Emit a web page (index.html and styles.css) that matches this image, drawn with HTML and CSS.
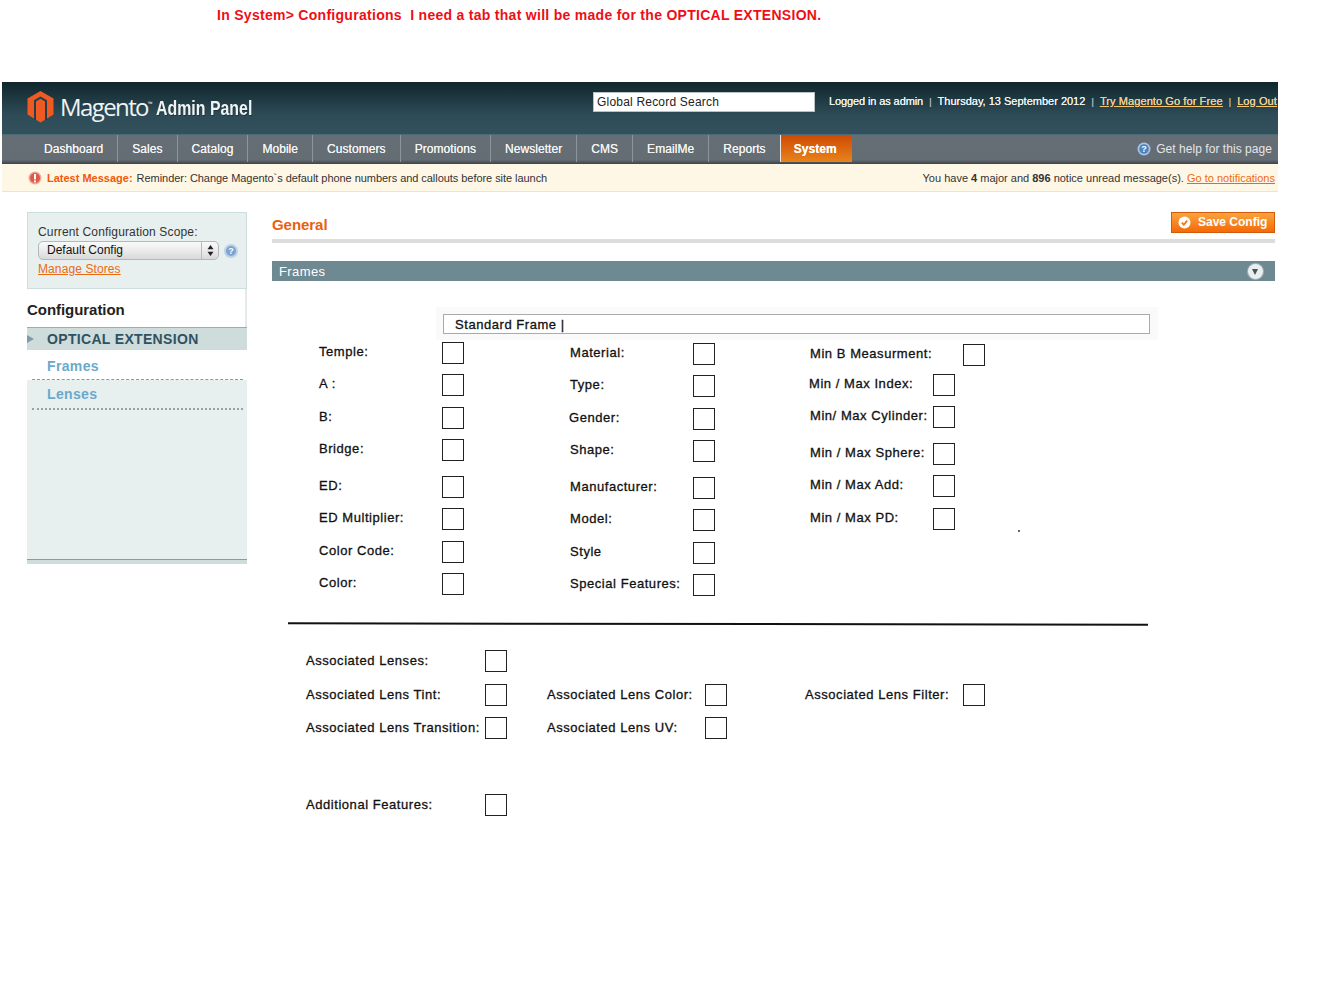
FILE: index.html
```html
<!DOCTYPE html>
<html lang="en">
<head>
<meta charset="utf-8">
<title>Magento Admin Panel</title>
<link rel="stylesheet" href="styles.css">
</head>
<body>
<p class="request">In System&gt; Configurations&nbsp; I need a tab that will be made for the OPTICAL EXTENSION.</p>
<div class="shell">
  <header class="topbar">
    <div class="brand">
      <svg class="logo" width="27" height="32" viewBox="0 0 27 32"><path fill="#ef5a22" d="M13.500 0 26.500 7.500V23.500L13.500 31.500 .5 23.500V7.500Z"/><path fill="none" stroke="#23404b" stroke-width="2" d="M8 29V9.800L13.500 6.600 19 9.800V29"/></svg>
      <span class="wordmark">Magento<sup class="tm">™</sup></span>
      <span class="panel-name">Admin Panel</span>
    </div>
    <div class="search">Global Record Search</div>
    <div class="session">
      <span class="who">Logged in as admin</span><i>|</i><span>Thursday, 13 September 2012</span><i>|</i><a href="#">Try Magento Go for Free</a><i>|</i><a href="#">Log Out</a>
    </div>
  </header>
  <nav class="nav">
    <ul class="nav-list">
      <li>Dashboard</li><li>Sales</li><li>Catalog</li><li>Mobile</li><li>Customers</li><li>Promotions</li><li>Newsletter</li><li>CMS</li><li>EmailMe</li><li>Reports</li><li class="active">System</li>
    </ul>
    <div class="help">
      <svg width="14" height="14" viewBox="0 0 14 14"><circle cx="7" cy="7" r="6.500" fill="#a9c6e8"/><circle cx="7" cy="7" r="4.800" fill="#4f83bd"/><text x="7" y="10" class="glyph">?</text></svg>
      <span>Get help for this page</span>
    </div>
  </nav>
  <div class="notice">
    <div class="notice-left">
      <svg width="14" height="14" viewBox="0 0 14 14"><circle cx="7" cy="7" r="6.500" fill="#f0a79a"/><circle cx="7" cy="7" r="5" fill="#dd5a48"/><rect x="6" y="3" width="2" height="5.500" fill="#fff"/><rect x="6" y="9.500" width="2" height="1.800" fill="#fff"/></svg>
      <b class="latest">Latest Message:</b>
      <span class="reminder">Reminder: Change Magento`s default phone numbers and callouts before site launch</span>
    </div>
    <div class="notice-right">You have <b>4</b> major and <b>896</b> notice unread message(s). <a href="#">Go to notifications</a></div>
  </div>
  <div class="content">
    <aside class="sidebar">
      <div class="scope">
        <div class="scope-label">Current Configuration Scope:</div>
        <div class="scope-row">
          <div class="select"><span>Default Config</span><span class="select-arrows"><svg width="7" height="11" viewBox="0 0 7 11"><path fill="#222" d="M3.500 0 6.500 4.300H.5ZM3.500 11 .5 6.700H6.500Z"/></svg></span></div>
          <svg class="scope-help" width="14" height="14" viewBox="0 0 14 14"><circle cx="7" cy="7" r="7" fill="#bcd2e8"/><circle cx="7" cy="7" r="5" fill="#7ea3cf"/><text x="7" y="10" class="glyph">?</text></svg>
        </div>
        <a class="manage" href="#">Manage Stores</a>
      </div>
      <h3 class="side-title">Configuration</h3>
      <div class="side-section"><span class="side-arrow"></span>OPTICAL EXTENSION</div>
      <a class="side-link side-link-on" href="#">Frames</a>
      <div class="side-rest">
        <a class="side-link" href="#">Lenses</a>
      </div>
    </aside>
    <main class="main">
      <div class="main-head">
        <h2 class="main-title">General</h2>
        <button class="save" type="button"><svg width="13" height="13" viewBox="0 0 13 13"><circle cx="6.500" cy="6.500" r="6" fill="#fff"/><path d="M3.800 6.700 5.800 8.700 9.200 4.600" fill="none" stroke="#f07a10" stroke-width="1.800"/></svg><span class="save-text">Save Config</span></button>
      </div>
      <div class="rule"></div>
      <div class="bar"><span>Frames</span><span class="toggle"></span></div>
      <section class="sheet">
        <div class="frame-panel"><div class="frame-input">Standard Frame |</div></div>
        <div class="fields">
          <div class="col">
            <div class="field"><label>Temple:</label><span class="box"></span></div>
            <div class="field gap-11"><label>A :</label><span class="box"></span></div>
            <div class="field"><label>B:</label><span class="box"></span></div>
            <div class="field gap-15"><label>Bridge:</label><span class="box"></span></div>
            <div class="field"><label>ED:</label><span class="box"></span></div>
            <div class="field gap-11"><label>ED Multiplier:</label><span class="box"></span></div>
            <div class="field"><label>Color Code:</label><span class="box"></span></div>
            <div class="field"><label>Color:</label><span class="box"></span></div>
          </div>
          <div class="col col-2">
            <div class="field"><label>Material:</label><span class="box"></span></div>
            <div class="field gap-11"><label>Type:</label><span class="box"></span></div>
            <div class="field"><label class="pull">Gender:</label><span class="box"></span></div>
            <div class="field gap-15"><label>Shape:</label><span class="box"></span></div>
            <div class="field"><label>Manufacturer:</label><span class="box"></span></div>
            <div class="field gap-11"><label>Model:</label><span class="box"></span></div>
            <div class="field"><label>Style</label><span class="box"></span></div>
            <div class="field"><label>Special Features:</label><span class="box"></span></div>
          </div>
          <div class="col col-3">
            <div class="field gap-8 wide"><label>Min B Measurment:</label><span class="box"></span></div>
            <div class="field"><label class="pull">Min / Max Index:</label><span class="box"></span></div>
            <div class="field gap-15"><label>Min/ Max Cylinder:</label><span class="box"></span></div>
            <div class="field"><label>Min / Max Sphere:</label><span class="box"></span></div>
            <div class="field gap-11"><label>Min / Max Add:</label><span class="box"></span></div>
            <div class="field"><label>Min / Max PD:</label><span class="box"></span></div>
          </div>
          <span class="speck"></span>
        </div>
        <hr class="divider">
        <div class="assoc">
          <div class="assoc-row assoc-first">
            <div class="field assoc-a"><label>Associated Lenses:</label><span class="box"></span></div>
          </div>
          <div class="assoc-row">
            <div class="field assoc-a"><label>Associated Lens Tint:</label><span class="box"></span></div>
            <div class="field assoc-b"><label>Associated Lens Color:</label><span class="box"></span></div>
            <div class="field assoc-c"><label>Associated Lens Filter:</label><span class="box"></span></div>
          </div>
          <div class="assoc-row">
            <div class="field assoc-a"><label>Associated Lens Transition:</label><span class="box"></span></div>
            <div class="field assoc-b"><label>Associated Lens UV:</label><span class="box"></span></div>
          </div>
          <div class="assoc-row assoc-last">
            <div class="field assoc-a"><label>Additional Features:</label><span class="box"></span></div>
          </div>
        </div>
      </section>
    </main>
  </div>
</div>
</body>
</html>
```
FILE: styles.css
```css
* { box-sizing: border-box; }
html, body { margin: 0; padding: 0; background: #fff; }
body { font-family: "Liberation Sans", Arial, sans-serif; color: #2f2f2f; height: 1000px; overflow: hidden; }
a { color: inherit; }
.request { margin: 0; height: 82px; padding: 7px 0 0 217px; color: #ee0f16; font-size: 14px; line-height: 16px; font-weight: 700; letter-spacing: .285px; }
.shell { margin-left: 2px; width: 1276px; overflow: hidden; }

.topbar { height: 53px; display: flex; background: linear-gradient(#10262c, #2e4c58 65%, #33515c); border-bottom: 1px solid #4c6a76; white-space: nowrap; overflow: hidden; }
.brand { width: 591px; flex: none; display: flex; align-items: flex-start; color: #fff; padding: 9px 0 0 25px; }
.logo { display: block; flex: none; }
.wordmark { margin-left: 6px; font-family: "Open Sans", sans-serif; font-size: 24px; line-height: 32px; letter-spacing: -1.600px; color: #eef3f4; }
.tm { font-size: 6px; line-height: 0; vertical-align: 10px; letter-spacing: 0; }
.panel-name { display: inline-block; margin: 5px 0 0 3px; font-weight: 700; font-size: 20px; line-height: 24px; color: #eef3f4; text-shadow: 1px 1px 0 #1d323a; transform: scaleX(.795); transform-origin: left center; }
.search { flex: none; width: 222px; height: 20px; margin-top: 10px; padding-left: 3px; background: #fff; border: 1px solid #b9c1c4; color: #222; font-size: 12px; line-height: 18px; letter-spacing: .2px; }
.session { flex: none; margin: 12px 0 0 14px; color: #eef2f3; font-size: 11px; line-height: 14px; text-shadow: 0 0 .5px #fff; }
.who { letter-spacing: -.11px; }
.session i { font-style: normal; color: #8ea3ab; margin: 0 6.100px; font-size: 9px; }
.session a { color: #f7c56e; letter-spacing: .09px; }

.nav { height: 29px; display: flex; justify-content: space-between; background: linear-gradient(#666e75 0, #656d74 85%, #3d4348 100%); color: #f1f3f4; font-size: 12px; line-height: 28px; }
.nav-list { display: flex; margin: 0; padding: 0 0 0 28px; list-style: none; letter-spacing: .06px; }
.nav-list li { height: 27px; padding: 0 14px; border-right: 1px solid #8d959b; text-shadow: 0 0 .5px #fff; }
.nav-list .active { margin-left: -1px; padding: 0 14px 0 13px; border-left: 1px solid #e9e9e9; border-right: 0; font-weight: 700; color: #fff; background: linear-gradient(#cf4a04, #e8831b); width: 72px; }
.help { display: flex; align-items: center; gap: 5px; height: 27px; padding-right: 6px; color: #e2e6ea; letter-spacing: .05px; }
.help svg, .notice svg { display: block; flex: none; }
.glyph { fill: #fff; font: 700 9px "Liberation Sans", sans-serif; text-anchor: middle; }

.notice { height: 28px; display: flex; justify-content: space-between; align-items: center; background: #fff7e6; border-bottom: 1px solid #f5e3bd; color: #333; font-size: 11px; padding: 1px 3px 0 26px; }
.notice-left { display: flex; align-items: center; gap: 5px; }
.latest { color: #f0590b; }
.notice-left .latest { margin-right: -1px; }
.reminder { letter-spacing: -.05px; }
.notice-right a { color: #ee6a12; }

.content { display: flex; align-items: flex-start; padding: 20px 1px 0 25px; }
.sidebar { width: 220px; flex: none; height: 348px; display: flex; flex-direction: column; }
.scope { height: 77px; padding: 12px 10px 0 10px; background: #e7efef; border: 1px solid #cddddd; font-size: 12px; }
.scope-label { line-height: 14px; color: #333; letter-spacing: .15px; }
.scope-row { display: flex; align-items: center; gap: 5px; margin-top: 2px; }
.select { width: 181px; height: 19px; flex: none; display: flex; justify-content: space-between; border: 1px solid #b3b8b8; border-radius: 5px; background: linear-gradient(#fafafa, #e8e8e8 60%, #d8d8d8); color: #111; line-height: 17px; padding-left: 8px; }
.select-arrows { width: 17px; border-left: 1px solid #bbb; display: flex; align-items: center; justify-content: center; }
.scope-help { flex: none; display: block; }
.manage { display: block; color: #ee6a12; line-height: 14px; margin-top: 2px; letter-spacing: .1px; }
.side-title { height: 38px; margin: 0; background: #fff; border-right: 2px solid #e4e9e9; color: #222; font-size: 15px; line-height: 42px; font-weight: 700; letter-spacing: -.05px; }
.side-section { height: 23px; position: relative; padding-left: 20px; background: #cfdcdc; border-top: 1px solid #9aaeae; color: #2f5263; font-size: 14px; line-height: 23px; font-weight: 700; letter-spacing: .33px; }
.side-arrow { position: absolute; left: 0; top: 7px; border-left: 7px solid #7c9cab; border-top: 4px solid transparent; border-bottom: 4px solid transparent; }
.side-link { display: block; height: 30px; margin: 0 4px 0 5px; padding-left: 15px; color: #6aa9cd; font-size: 14px; line-height: 33px; font-weight: 700; letter-spacing: .35px; text-decoration: none; border-bottom: 1px dashed #8f9898; }
.side-link-on { background: #fff; }
.side-rest { flex: 1; background: #e7efef; border-bottom: 1px solid #8a9c9c; box-shadow: 0 4px 0 #cfdcdc; }
.side-rest .side-link { height: 30px; line-height: 29px; border-bottom: 2px dotted #9aa3a3; }

.main { width: 1003px; margin-left: 25px; flex: none; }
.main-head { height: 27px; display: flex; justify-content: space-between; align-items: flex-start; }
.main-title { margin: 4px 0 0; color: #eb5e0b; font-size: 15px; line-height: 18px; font-weight: 700; letter-spacing: -.05px; }
.save { width: 104px; height: 21px; display: flex; align-items: center; gap: 7px; padding: 0 0 0 6px; border: 1px solid #d35a0c; background: linear-gradient(#f9a43e, #f56a08); color: #fff; font: 700 12px "Liberation Sans", sans-serif; }
.save svg { display: block; flex: none; }
.save-text { position: relative; top: -1px; }
.rule { height: 4px; background: #ddd; }
.bar { height: 20px; margin-top: 18px; padding: 0 12px 0 7px; display: flex; justify-content: space-between; align-items: center; background: #6f8992; color: #fff; font-size: 13px; letter-spacing: .4px; }
.toggle { width: 15px; height: 15px; position: relative; border-radius: 50%; background: #e9eeee; box-shadow: 0 0 0 1px #a0b2b8; }
.toggle::after { content: ""; position: absolute; left: 4px; top: 5px; border-top: 6px solid #42555d; border-left: 3.500px solid transparent; border-right: 3.500px solid transparent; }

.sheet { position: relative; color: #111; font-size: 13px; letter-spacing: .55px; -webkit-text-stroke: .3px #111; padding-top: 26px; }
.frame-panel { width: 722px; height: 33px; margin-left: 164px; padding: 7px 0 0 7px; background: #fafafa; }
.frame-input { width: 707px; height: 20px; padding-left: 11px; background: #fff; border: 1px solid #aaa; font-size: 13px; line-height: 20px; }
.fields { position: relative; display: grid; grid-template-columns: 251px 240px auto; height: 281px; margin: 2px 0 0 47px; }
.col-2 { margin-top: 1px; }
.col-3 { margin-top: 2px; }
.field { height: 22px; margin-bottom: 10px; display: flex; align-items: center; }
.gap-11 { margin-bottom: 11px; }
.gap-15 { margin-bottom: 15px; }
.gap-8 { margin-bottom: 8px; }
.field label { flex: none; width: 123px; position: relative; top: -2px; white-space: nowrap; }
.wide label { width: 153px; }
.pull { left: -1px; }
.box { flex: none; width: 22px; height: 22px; border: 1px solid #222; background: #fff; }
.speck { position: absolute; left: 699px; top: 188px; width: 2px; height: 2px; border-radius: 50%; background: #333; }
.divider { width: 860px; height: 2px; margin: 0 0 0 16px; border: 0; background: #111; transform: rotate(.1deg); }
.assoc { margin-left: 34px; padding-top: 25px; }
.assoc-row { display: flex; height: 33px; }
.assoc-first { height: 34px; }
.assoc-last { margin-top: 44px; }
.assoc-row .field label { top: -1px; }
.field.assoc-a label { width: 179px; }
.assoc-a { width: 241px; }
.assoc-b { width: 258px; }
.field.assoc-b label { width: 158px; }
.field.assoc-c label { width: 158px; }
```
